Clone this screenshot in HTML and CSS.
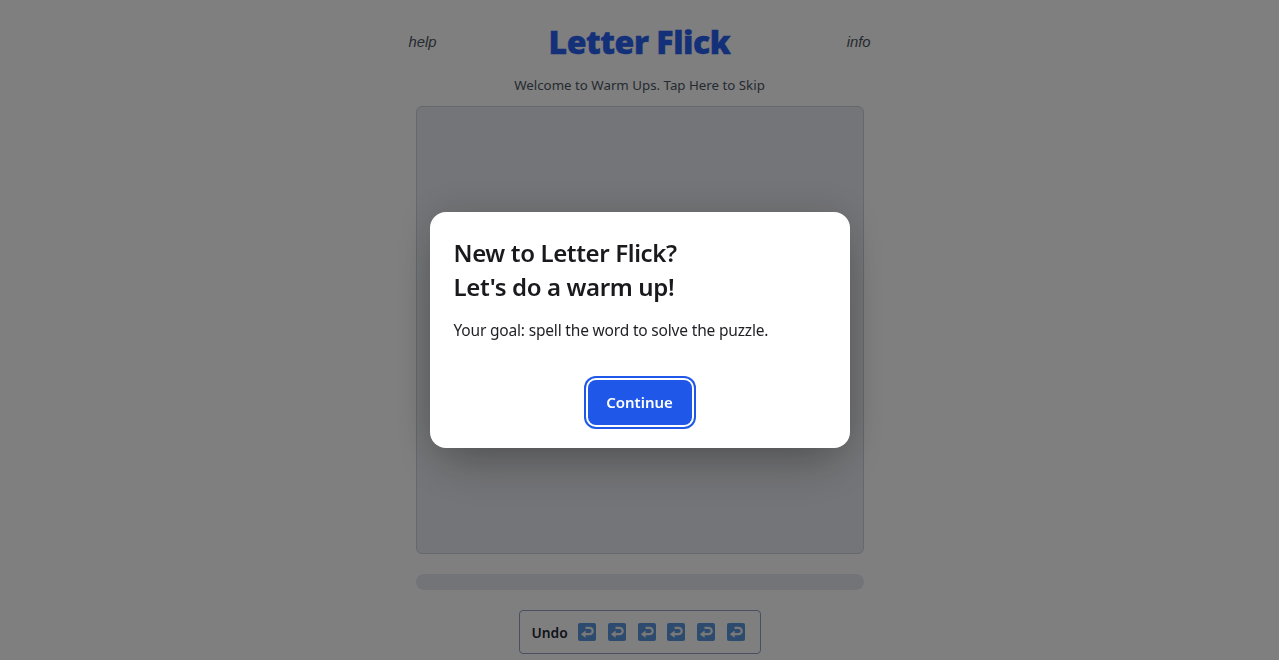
FILE: index.html
```html
<!DOCTYPE html>
<html lang="en">
<head>
  <meta charset="UTF-8">
  <title>Letter Flick</title>
  <link rel="stylesheet" href="styles.css">
</head>
<body>
  <svg class="defs" width="0" height="0" aria-hidden="true">
    <symbol id="undo-icon" viewBox="0 0 18 18">
      <rect width="18" height="18" rx="2" fill="#5a96dc"/>
      <path d="M7.5 4.8h4a3.2 3.2 0 0 1 0 6.4H5" fill="none" stroke="#f2f2f2" stroke-width="2.2"/>
      <path d="M7.6 7.6v7.2L2.8 11.2z" fill="#f2f2f2"/>
    </symbol>
  </svg>

  <div class="page">
    <header class="top">
      <a class="side-link">help</a>
      <h1 class="title">Letter Flick</h1>
      <a class="side-link right">info</a>
    </header>
    <p class="skip">Welcome to Warm Ups. Tap Here to Skip</p>
    <div class="board"></div>
    <div class="progress"></div>
    <div class="undo-box">
      <span class="undo-label">Undo</span>
      <svg class="undo"><use href="#undo-icon"/></svg>
      <svg class="undo"><use href="#undo-icon"/></svg>
      <svg class="undo"><use href="#undo-icon"/></svg>
      <svg class="undo"><use href="#undo-icon"/></svg>
      <svg class="undo"><use href="#undo-icon"/></svg>
      <svg class="undo"><use href="#undo-icon"/></svg>
    </div>
  </div>

  <div class="overlay">
    <div class="modal">
      <h2 class="modal-title">New to Letter Flick?<br>Let's do a warm up!</h2>
      <p class="modal-text">Your goal: spell the word to solve the puzzle.</p>
      <div class="modal-actions">
        <button class="continue">Continue</button>
      </div>
    </div>
  </div>
</body>
</html>
```

FILE: styles.css
```css
* {
  box-sizing: border-box;
}
html, body {
  height: 100%;
}
body {
  margin: 0;
  background: #fff;
  color: #1f2937;
  font-family: "Noto Sans", "Open Sans", sans-serif;
  overflow: hidden;
}
.defs {
  position: absolute;
}
.page {
  width: 480px;
  margin: 0 auto;
  padding: 0 8px;
  display: flex;
  flex-direction: column;
  align-items: center;
}
.top {
  width: 100%;
  height: 84px;
  display: flex;
  align-items: center;
  justify-content: space-between;
}
.side-link {
  width: 60px;
  margin-left: 1px;
  margin-right: 1px;
  font-family: "Liberation Sans", Arial, sans-serif;
  font-size: 14.8px;
  font-style: italic;
  color: #4b5563;
}
.side-link.right {
  text-align: right;
}
.title {
  margin: 0 0 2px;
  font-size: 32px;
  font-weight: 900;
  color: #2660f0;
  letter-spacing: -0.45px;
  -webkit-text-stroke: 0.4px #2660f0;
}
.skip {
  margin: -9px 0 0;
  height: 31px;
  font-size: 13.3px;
  line-height: 20px;
  color: #4b5563;
  text-align: center;
}
.board {
  width: 448px;
  height: 448px;
  background: #e9ebf0;
  border: 1px solid #cbd0d8;
  border-radius: 6px;
}
.progress {
  width: 448px;
  height: 16px;
  margin-top: 20px;
  background: #e7e9ee;
  border-radius: 8px;
}
.undo-box {
  width: 242px;
  height: 44px;
  margin-top: 20px;
  padding: 0 16px 0 12px;
  display: flex;
  align-items: center;
  border: 1px solid #93a1c4;
  border-radius: 4px;
}
.undo-label {
  font-size: 13.8px;
  font-weight: 600;
  color: #1f2937;
  margin-right: 10px;
}
.undo {
  width: 18px;
  height: 18px;
  margin-right: 11.9px;
  flex: none;
}
.undo:last-child {
  margin-right: 0;
}
.overlay {
  position: fixed;
  top: 0;
  right: 0;
  bottom: 0;
  left: 0;
  background: rgba(0, 0, 0, 0.5);
  display: flex;
  align-items: center;
  justify-content: center;
}
.modal {
  width: 420px;
  height: 236px;
  padding: 24px;
  background: #fff;
  border-radius: 16px;
  box-shadow: 0 25px 50px -12px rgba(0, 0, 0, 0.25), 0 0 40px rgba(0, 0, 0, 0.15);
}
.modal-title {
  margin: 0 0 14px;
  font-size: 24px;
  line-height: 34px;
  font-weight: 600;
  letter-spacing: -0.37px;
  color: #1a1a1e;
}
.modal-text {
  margin: 0;
  font-size: 15.5px;
  line-height: 24px;
  letter-spacing: -0.18px;
  color: #1f1f24;
}
.modal-actions {
  margin-top: 38px;
  display: flex;
  justify-content: center;
}
.continue {
  width: 104px;
  height: 45px;
  padding: 0 0 2px;
  border: none;
  border-radius: 8px;
  background: #1f58e8;
  color: #fff;
  font-family: inherit;
  font-size: 15px;
  font-weight: 600;
  box-shadow: 0 0 0 2px #fff, 0 0 0 4px #1f58e8;
}
```
